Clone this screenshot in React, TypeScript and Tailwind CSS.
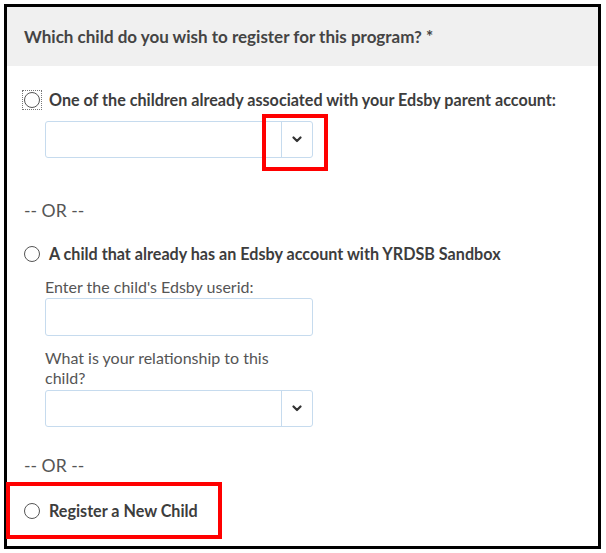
import React from "react";

function Chevron() {
  return (
    <svg width="10" height="7" viewBox="0 0 10 7" className="block">
      <polyline points="1.5,1.5 5,5 8.5,1.5" fill="none" stroke="#333" strokeWidth="2.2" strokeLinecap="round" strokeLinejoin="round" />
    </svg>
  );
}

function Radio({ focused = false }: { focused?: boolean }) {
  return (
    <div className={focused ? "w-[20px] h-[20px] flex items-center justify-center border border-dotted border-[#777]" : "w-[20px] h-[20px] flex items-center justify-center"}>
      <div className="w-[16px] h-[16px] rounded-full border-[1.5px] border-[#555] bg-white" />
    </div>
  );
}

function Select() {
  return (
    <div className="ml-[21px] w-[268px] h-[37px] flex border border-[#c6dbee] rounded-[3px] bg-white">
      <div className="flex-1" />
      <div className="w-[31px] border-l border-[#c6dbee] flex items-center justify-center">
        <Chevron />
      </div>
    </div>
  );
}

export default function App() {
  return (
    <div className="w-[606px] h-[553px] bg-white" style={{ fontFamily: "Lato, 'Open Sans', sans-serif" }}>
      <div className="relative ml-[4px] mt-[4px] w-[597px] h-[545px] border-[3px] border-black">
        <div className="h-[59px] bg-[#f0f0f0] flex items-center pl-[17px]">
          <span className="text-[17px] font-bold text-[#444]">Which child do you wish to register for this program? *</span>
        </div>
        <div className="pl-[17px]">
          <div className="mt-[22px] h-[24px] flex items-center gap-[7px] -ml-[2px]">
            <Radio focused />
            <span className="text-[16.15px] font-bold text-[#3d3d3d]">One of the children already associated with your Edsby parent account:</span>
          </div>
          <div className="mt-[9px]">
            <Select />
          </div>
          <div className="mt-[41px] h-[24px] flex items-center text-[17.6px] text-[#555]">-- OR --</div>
          <div className="mt-[19px] h-[24px] flex items-center gap-[7px] -ml-[2px]">
            <Radio />
            <span className="text-[16.15px] font-bold text-[#3d3d3d]">A child that already has an Edsby account with YRDSB Sandbox</span>
          </div>
          <div className="ml-[21px] mt-[11px] h-[20px] flex items-center text-[16px] text-[#555]">Enter the child's Edsby userid:</div>
          <div className="ml-[21px] mt-[1px] w-[268px] h-[38px] border border-[#c6dbee] rounded-[3px] bg-white" />
          <div className="ml-[21px] mt-[12px] w-[268px] text-[16px] leading-[20px] text-[#555]">What is your relationship to this child?</div>
          <div className="mt-[2px]">
            <Select />
          </div>
          <div className="mt-[27px] h-[24px] flex items-center text-[17.6px] text-[#555]">-- OR --</div>
          <div className="mt-[21px] h-[24px] flex items-center gap-[7px] -ml-[2px]">
            <Radio />
            <span className="text-[16.15px] font-bold text-[#3d3d3d]">Register a New Child</span>
          </div>
        </div>
        <div className="absolute left-[255px] top-[107px] w-[66px] h-[57px] border-[4px] border-[#ff0000]" />
        <div className="absolute left-[-1px] top-[475px] w-[216px] h-[57px] border-[4px] border-[#ff0000]" />
      </div>
    </div>
  );
}
